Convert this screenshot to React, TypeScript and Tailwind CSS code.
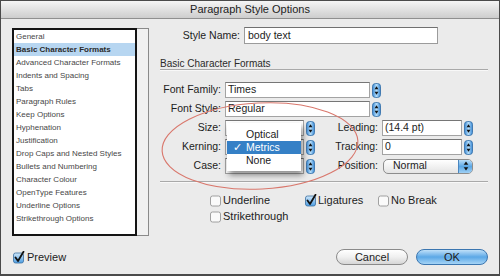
import React from 'react'

const items = [
  'General',
  'Basic Character Formats',
  'Advanced Character Formats',
  'Indents and Spacing',
  'Tabs',
  'Paragraph Rules',
  'Keep Options',
  'Hyphenation',
  'Justification',
  'Drop Caps and Nested Styles',
  'Bullets and Numbering',
  'Character Colour',
  'OpenType Features',
  'Underline Options',
  'Strikethrough Options',
]

const Stepper = () => (
  <svg width="9" height="15" viewBox="0 0 9 15" className="shrink-0">
    <defs>
      <linearGradient id="stp" x1="0" y1="0" x2="1" y2="0">
        <stop offset="0" stopColor="#3b8ad6" />
        <stop offset="0.5" stopColor="#b3dbf7" />
        <stop offset="1" stopColor="#3b8ad6" />
      </linearGradient>
    </defs>
    <rect x="0.5" y="0.5" width="8" height="14" rx="3" fill="url(#stp)" stroke="#2f6aa3" strokeWidth="0.8" />
    <path d="M4.5 3.2 L6.4 6.2 L2.6 6.2 Z" fill="#111" />
    <path d="M4.5 11.8 L6.4 8.8 L2.6 8.8 Z" fill="#111" />
  </svg>
)

const Box = ({ checked = false }: { checked?: boolean }) => (
  <svg width="13" height="13" viewBox="0 0 13 13" className="shrink-0">
    <defs>
      <linearGradient id="chk" x1="0" y1="0" x2="0" y2="1">
        <stop offset="0" stopColor="#cfe7fa" />
        <stop offset="1" stopColor="#4d9ee3" />
      </linearGradient>
    </defs>
    <rect
      x="1.5"
      y="2"
      width="10"
      height="10"
      rx="2"
      fill={checked ? 'url(#chk)' : '#fafafa'}
      stroke={checked ? '#3b6fa0' : '#8c8c8c'}
      strokeWidth="0.8"
    />
    {checked && <path d="M3.5 6.5 L6 10 L11.5 0.8" fill="none" stroke="#111" strokeWidth="1.8" strokeLinecap="round" strokeLinejoin="round" />}
  </svg>
)

const App = () => {
  return (
    <div className="relative w-[500px] h-[276px] overflow-hidden flex flex-col bg-[#ebebeb] border border-b-2 border-[#4a4a4a] font-['Liberation_Sans',Arial,sans-serif] text-[#1c1c1c]">

      {/* title bar */}
      <div className="h-[18px] shrink-0 flex items-center justify-center bg-gradient-to-b from-[#f5f5f5] to-[#cdcdcd] border-b border-[#8f8f8f] text-[11px] text-[#222]">
        Paragraph Style Options
      </div>

      <div className="flex flex-1">

        {/* left column */}
        <div className="w-[159px] shrink-0 pl-[11px] pt-[9px] flex flex-col">
          <div className="flex w-[137px] h-[208px]">
            <div className="w-[125px] h-full border-2 border-[#141414] bg-white flex flex-col text-[8px] text-[#474747]">
              {items.map((it) => (
                <div
                  key={it}
                  className={
                    it === 'Basic Character Formats'
                      ? 'h-[13px] flex items-center pl-[2px] bg-[#b7d6f1] font-bold text-[#2a2a2a]'
                      : 'h-[13px] flex items-center pl-[2px]'
                  }
                >
                  {it}
                </div>
              ))}
            </div>
            <div className="w-[12px] h-full bg-[#f1f1f1] border border-l-0 border-[#8a8a8a]" />
          </div>
          <div className="mt-[13px] flex items-center gap-[2px] text-[11px] text-[#222]">
            <Box checked />
            <span>Preview</span>
          </div>
        </div>

        {/* right column */}
        <div className="flex-1 pr-[11px] pt-[8px] pb-[9px] flex flex-col text-[10.5px]">
          <div className="flex items-center h-[17px]">
            <span className="w-[80px] text-right">Style Name:</span>
            <div className="ml-[4px] w-[194px] h-[17px] bg-white border border-[#9b9b9b] border-t-[#707070] flex items-center px-[3px]">body text</div>
          </div>

          <div className="mt-[13px] h-[12px] flex items-center text-[10px] text-[#2a2a2a]">Basic Character Formats</div>
          <div className="h-[2px] border-t border-[#a9a9a9] border-b border-b-[#f8f8f8]" />

          <div className="mt-[11px] flex flex-col gap-[3px]">
            <div className="flex items-center h-[16px]">
              <span className="w-[61px] text-right">Font Family:</span>
              <div className="ml-[4px] w-[156px] flex items-center gap-[2px]">
                <div className="flex-1 h-[16px] bg-white border border-[#a3a3a3] border-t-[#767676] flex items-center px-[2px]">Times</div>
                <Stepper />
              </div>
            </div>
            <div className="flex items-center h-[16px]">
              <span className="w-[61px] text-right">Font Style:</span>
              <div className="ml-[4px] w-[156px] flex items-center gap-[2px]">
                <div className="flex-1 h-[16px] bg-white border border-[#a3a3a3] border-t-[#767676] flex items-center px-[2px]">Regular</div>
                <Stepper />
              </div>
            </div>
            <div className="flex items-center h-[16px]">
              <span className="w-[61px] text-right">Size:</span>
              <div className="ml-[4px] w-[90px] flex items-center gap-[2px]">
                <div className="flex-1 h-[16px] bg-white border border-[#a3a3a3] border-t-[#767676]" />
                <Stepper />
              </div>
              <span className="ml-[4px] w-[59px] text-right">Leading:</span>
              <div className="ml-[4px] w-[91px] flex items-center gap-[2px]">
                <div className="flex-1 h-[16px] bg-white border border-[#a3a3a3] border-t-[#767676] flex items-center px-[2px]">(14.4 pt)</div>
                <Stepper />
              </div>
            </div>
            <div className="flex items-center h-[16px]">
              <span className="w-[61px] text-right">Kerning:</span>
              <div className="ml-[4px] w-[90px] flex items-center gap-[2px]">
                <div className="flex-1 h-[16px] bg-white border border-[#a3a3a3] border-t-[#767676]" />
                <Stepper />
              </div>
              <span className="ml-[4px] w-[59px] text-right">Tracking:</span>
              <div className="ml-[4px] w-[91px] flex items-center gap-[2px]">
                <div className="flex-1 h-[16px] bg-white border border-[#a3a3a3] border-t-[#767676] flex items-center px-[2px]">0</div>
                <Stepper />
              </div>
            </div>
            <div className="flex items-center h-[16px]">
              <span className="w-[61px] text-right">Case:</span>
              <div className="ml-[4px] w-[90px] flex items-center gap-[2px]">
                <div className="flex-1 h-[16px] bg-white border border-[#a3a3a3] border-t-[#767676]" />
                <Stepper />
              </div>
              <span className="ml-[4px] w-[59px] text-right">Position:</span>
              <div className="ml-[5px] w-[90px] h-[15px] flex items-center rounded-[5px] border border-[#8d8d8d] bg-gradient-to-b from-white to-[#e4e4e4] overflow-hidden">
                <span className="flex-1 pl-[9px]">Normal</span>
                <div className="w-[14px] h-full flex flex-col items-center justify-center bg-gradient-to-b from-[#b9ddf7] via-[#5aa7e5] to-[#9fd0f4] border-l border-[#4a86bf]">
                  <svg width="6" height="10" viewBox="0 0 6 10">
                    <path d="M3 0.5 L5.3 3.8 L0.7 3.8 Z" fill="#111" />
                    <path d="M3 9.5 L5.3 6.2 L0.7 6.2 Z" fill="#111" />
                  </svg>
                </div>
              </div>
            </div>
          </div>

          <div className="mt-[7px] h-[2px] border-t border-[#a9a9a9] border-b border-b-[#f8f8f8]" />

          <div className="mt-[11px] flex flex-col gap-[3px] text-[11px] pl-[49px]">
            <div className="flex items-center h-[13px]">
              <div className="w-[95px] flex items-center gap-[1px]"><Box /><span>Underline</span></div>
              <div className="w-[73px] flex items-center gap-[1px]"><Box checked /><span>Ligatures</span></div>
              <div className="flex items-center gap-[1px]"><Box /><span>No Break</span></div>
            </div>
            <div className="flex items-center h-[13px]">
              <div className="flex items-center gap-[1px]"><Box /><span>Strikethrough</span></div>
            </div>
          </div>

          <div className="mt-auto flex justify-end gap-[8px] text-[11px]">
            <div className="w-[72px] h-[16px] rounded-full border border-[#8a8a8a] bg-gradient-to-b from-white via-[#f0f0f0] to-[#d6d6d6] flex items-center justify-center">Cancel</div>
            <div className="w-[72px] h-[16px] rounded-full border border-[#3b76b0] bg-gradient-to-b from-[#bfe0f8] via-[#5ba8e6] to-[#a5d4f6] flex items-center justify-center">OK</div>
          </div>
        </div>
      </div>

      {/* open popup menu */}
      <div className="absolute left-[226px] top-[122px] w-[74px] h-[48px] bg-white pt-[5px] shadow-[2px_4px_6px_rgba(0,0,0,0.45)] text-[10.5px] text-[#1c1c1c]">
        <div className="h-[13px] flex items-center pl-[19px]">Optical</div>
        <div className="h-[13px] flex items-center bg-[#3580c6] text-white">
          <span className="w-[19px] pl-[6px]">✓</span>
          <span>Metrics</span>
        </div>
        <div className="h-[13px] flex items-center pl-[19px]">None</div>
      </div>

      {/* red annotation */}
      <svg className="absolute left-0 top-0 pointer-events-none" width="500" height="276">
        <ellipse cx="259" cy="145" rx="98" ry="43" fill="none" stroke="#d9776c" strokeWidth="1.1" transform="rotate(-3 259 145)" />
      </svg>
    </div>
  )
}

export default App
